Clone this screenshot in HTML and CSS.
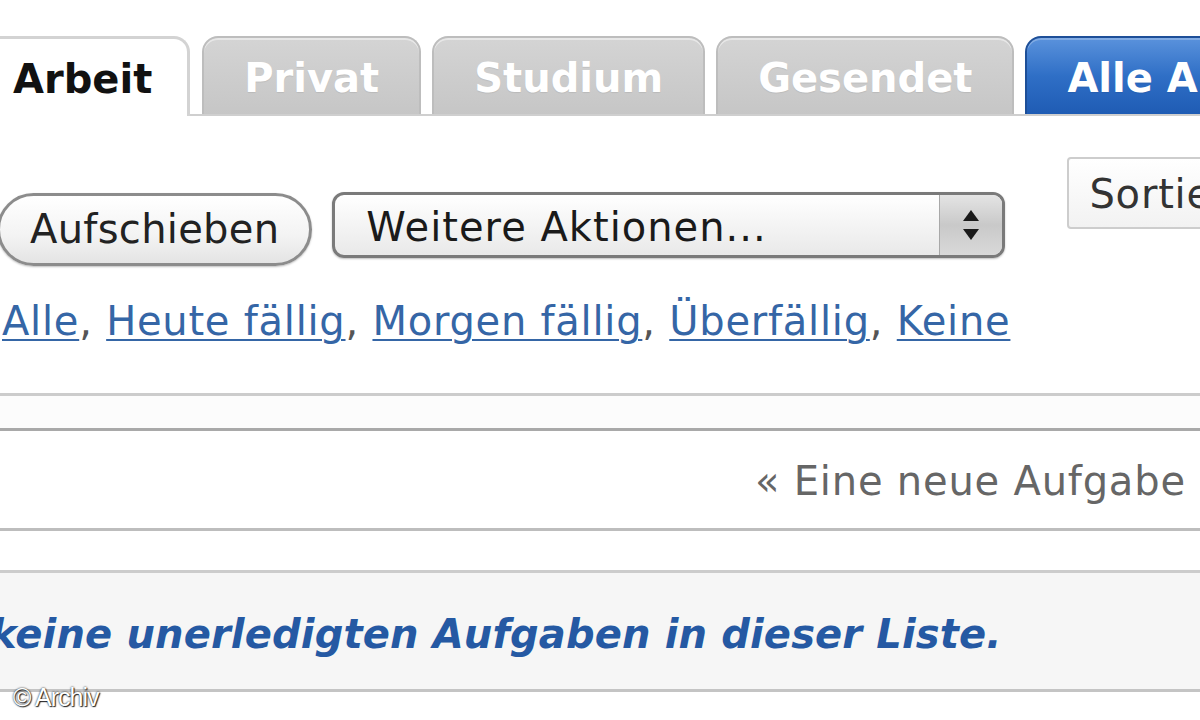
FILE: index.html
```html
<!DOCTYPE html>
<html lang="de">
<head>
    <meta charset="UTF-8">
    <title>Aufgaben</title>
    <link rel="stylesheet" href="styles.css">
</head>
<body>
    <div class="page">
        <!-- Reiter -->
        <div class="tabs">
            <div class="tab active">Arbeit</div>
            <div class="tab">Privat</div>
            <div class="tab">Studium</div>
            <div class="tab">Gesendet</div>
            <div class="tab blue">Alle Aufgaben</div>
        </div>

        <div class="toolbar">
            <div class="actions">
                <div class="buttons">
                    <div class="btn">Aufschieben</div>
                    <div class="select">
                        <span class="select-label">Weitere Aktionen...</span>
                        <span class="stepper">
                            <svg width="22" height="36" viewBox="0 0 22 36">
                                <path d="M11 3 L19 14 L3 14 Z" fill="#1a1a1a"/>
                                <path d="M11 33 L19 22 L3 22 Z" fill="#1a1a1a"/>
                            </svg>
                        </span>
                    </div>
                </div>
                <div class="filters">
                    <a href="#">Alle</a>, <a href="#">Heute fällig</a>, <a href="#">Morgen fällig</a>, <a href="#">Überfällig</a>, <a href="#">Keine</a>
                </div>
            </div>
            <div class="sort">Sortieren nach...</div>
        </div>

        <div class="list-head"></div>
        <div class="new-row">« Eine neue Aufgabe hinzufügen</div>
        <div class="spacer"></div>
        <div class="message">keine unerledigten Aufgaben in dieser Liste.</div>
    </div>
    <div class="credit">© Archiv</div>
</body>
</html>
```

FILE: styles.css
```css
html, body {
    margin: 0;
    overflow: hidden;
    background-color: white;
}
body {
    font-family: "DejaVu Sans", Verdana, sans-serif;
    width: 1200px;
    height: 720px;
    position: relative;
}
.page {
    width: 1200px;
    overflow: hidden;
}

/* Reiter */
.tabs {
    display: flex;
    gap: 11px;
    margin-left: -30px;
    padding-top: 36px;
    border-bottom: 2px solid #cfcfcf;
    white-space: nowrap;
}
.tab {
    flex-shrink: 0;
    height: 76px;
    line-height: 80px;
    padding: 0 40px;
    font-size: 40px;
    font-weight: bold;
    color: white;
    background: linear-gradient(#d4d4d4, #c6c6c6);
    border: 2px solid #bdbdbd;
    border-bottom: none;
    border-radius: 16px 16px 0 0;
    box-shadow: inset 0 2px 0 rgba(255, 255, 255, 0.45);
    text-shadow: 0 1px 1px rgba(0, 0, 0, 0.08);
}
.tab.active {
    color: #111;
    background: white;
    border: 3px solid #d3d3d3;
    border-bottom: none;
    height: 77px;
    margin-bottom: -2px;
    margin-right: 1px;
    padding-right: 35px;
    box-shadow: none;
    text-shadow: none;
}
.tab.blue {
    background: linear-gradient(#5a92dc, #2f6fc6 50%, #1f5cb4);
    border-color: #1d4f98;
    box-shadow: inset 0 2px 0 rgba(255, 255, 255, 0.25);
}

/* Werkzeugleiste */
.toolbar {
    display: flex;
    align-items: flex-start;
    white-space: nowrap;
}
.actions {
    padding-top: 77px;
    margin-left: -3px;
}
.buttons {
    display: flex;
    align-items: flex-start;
    gap: 20px;
}
.btn {
    height: 67px;
    line-height: 67px;
    padding: 0 30px;
    font-size: 40px;
    letter-spacing: 0.3px;
    color: #222;
    background: linear-gradient(#ffffff, #f3f3f3 60%, #e4e4e4);
    border: 3px solid #8c8c8c;
    border-radius: 40px;
    box-shadow: 0 1px 2px rgba(0, 0, 0, 0.25);
}
.select {
    display: flex;
    width: 667px;
    height: 60px;
    margin-top: -1px;
    border: 3px solid #7a7a7a;
    border-radius: 12px;
    background: linear-gradient(#ffffff, #f4f4f4 50%, #e9e9e9);
    box-shadow: 0 1px 2px rgba(0, 0, 0, 0.25);
    overflow: hidden;
}
.select-label {
    flex: 1;
    padding-left: 31px;
    line-height: 64px;
    font-size: 40px;
    letter-spacing: 1px;
    color: #1a1a1a;
}
.stepper {
    width: 62px;
    display: flex;
    align-items: center;
    justify-content: center;
    border-left: 1px solid #a8a8a8;
    background: linear-gradient(#e4e4e4, #c9c9c9 50%, #d9d9d9);
}
.filters {
    margin-top: 31px;
    line-height: 48px;
    font-size: 40px;
    letter-spacing: 0.75px;
    color: #555;
    padding-left: 5px;
}
.filters a {
    color: #3566a6;
    text-decoration: underline;
    text-decoration-thickness: 2px;
    text-underline-offset: 4px;
}
.sort {
    margin-left: 57px;
    margin-top: 41px;
    height: 68px;
    line-height: 70px;
    padding: 0 20px;
    font-size: 40px;
    letter-spacing: 0.8px;
    color: #333;
    background: linear-gradient(#ffffff, #f2f2f2);
    border: 2px solid #cdcdcd;
    border-radius: 4px;
}

/* Liste */
.list-head {
    margin-top: 48px;
    height: 32px;
    border-top: 3px solid #cccccc;
    border-bottom: 3px solid #a9a9a9;
    background: #fcfcfc;
}
.new-row {
    padding: 26px 0 23px 755px;
    line-height: 48px;
    font-size: 40px;
    letter-spacing: 0.8px;
    color: #666;
    white-space: nowrap;
    border-bottom: 3px solid #bdbdbd;
}
.spacer {
    height: 39px;
}
.message {
    height: 79px;
    padding-top: 37px;
    margin-left: -10px;
    line-height: 48px;
    font-size: 40px;
    letter-spacing: 0.15px;
    font-weight: bold;
    font-style: italic;
    color: #2559a3;
    white-space: nowrap;
    background: #f6f6f6;
    border-top: 3px solid #cccccc;
    border-bottom: 3px solid #c4c4c4;
}

/* Bildnachweis */
.credit {
    position: absolute;
    left: 13px;
    top: 683px;
    font-family: "Liberation Sans", Arial, sans-serif;
    font-size: 25px;
    letter-spacing: -1px;
    color: white;
    text-shadow: 0 0 2px #000, 1px 1px 1px #333;
}
```
